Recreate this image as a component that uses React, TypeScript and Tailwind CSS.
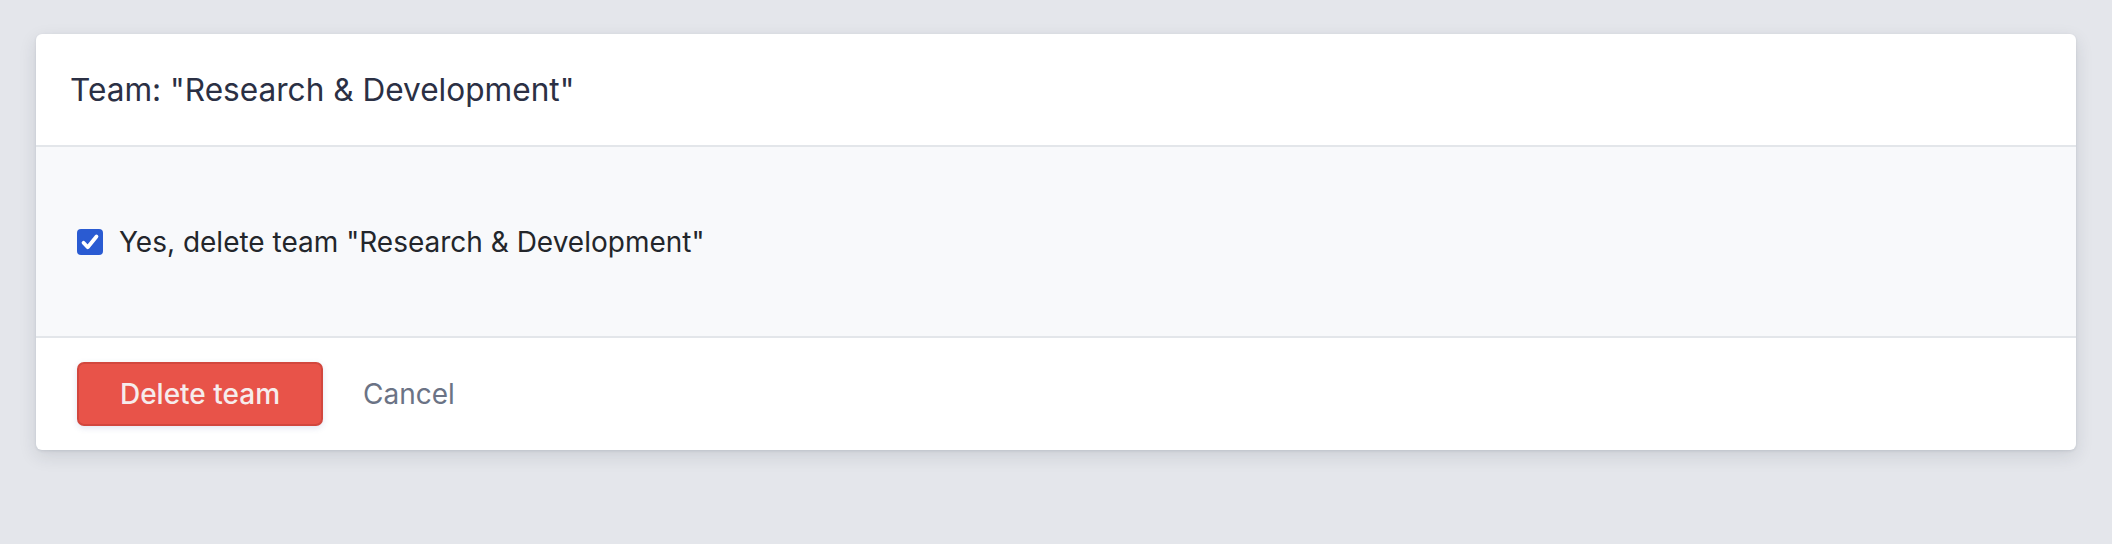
import React from "react";

// Delete-team confirmation card: header with team name, checkbox confirm row
// on a tinted panel, and a footer with the destructive action + cancel link.

function CheckIcon() {
  return (
    <svg viewBox="0 0 16 16" className="h-[20px] w-[20px]" aria-hidden>
      <path
        d="M2.8 8.6 6.2 12.2 13.2 3.6"
        fill="none"
        stroke="white"
        strokeWidth="3"
        strokeLinecap="round"
        strokeLinejoin="round"
      />
    </svg>
  );
}

export default function App() {
  const team = "Research & Development";

  return (
    <div className="min-h-[544px] bg-[#e4e6eb] px-[36px] pt-[34px] font-['Inter',sans-serif]">
      <div className="overflow-hidden rounded-[6px] bg-white shadow-[0_6px_18px_rgba(30,40,60,0.12),0_1px_3px_rgba(30,40,60,0.1)]">
        <div className="flex h-[111px] items-center px-[34px]">
          <h2 className="text-[31.6px] leading-none text-[#2b3044]">Team: "{team}"</h2>
        </div>

        <div className="flex h-[193px] items-center border-y-2 border-[#e3e6ea] bg-[#f8f9fb] px-[41px]">
          <label className="flex items-center gap-[16px]">
            <span className="flex h-[26px] w-[26px] items-center justify-center rounded-[4px] bg-[#2a5bd2]">
              <CheckIcon />
            </span>
            <span className="text-[28px] leading-none text-[#23262b]">Yes, delete team "{team}"</span>
          </label>
        </div>

        <div className="flex h-[112px] items-center gap-[40px] px-[41px]">
          <button
            type="button"
            className="flex h-[64px] w-[246px] items-center justify-center rounded-[7px] border-2 border-[#d2473e] bg-[#e85349] text-[28px] font-medium text-[#f6ecec] shadow-[0_2px_6px_rgba(60,90,160,0.15)]"
          >
            Delete team
          </button>
          <button type="button" className="text-[28px] text-[#6b7385]">
            Cancel
          </button>
        </div>
      </div>
    </div>
  );
}
